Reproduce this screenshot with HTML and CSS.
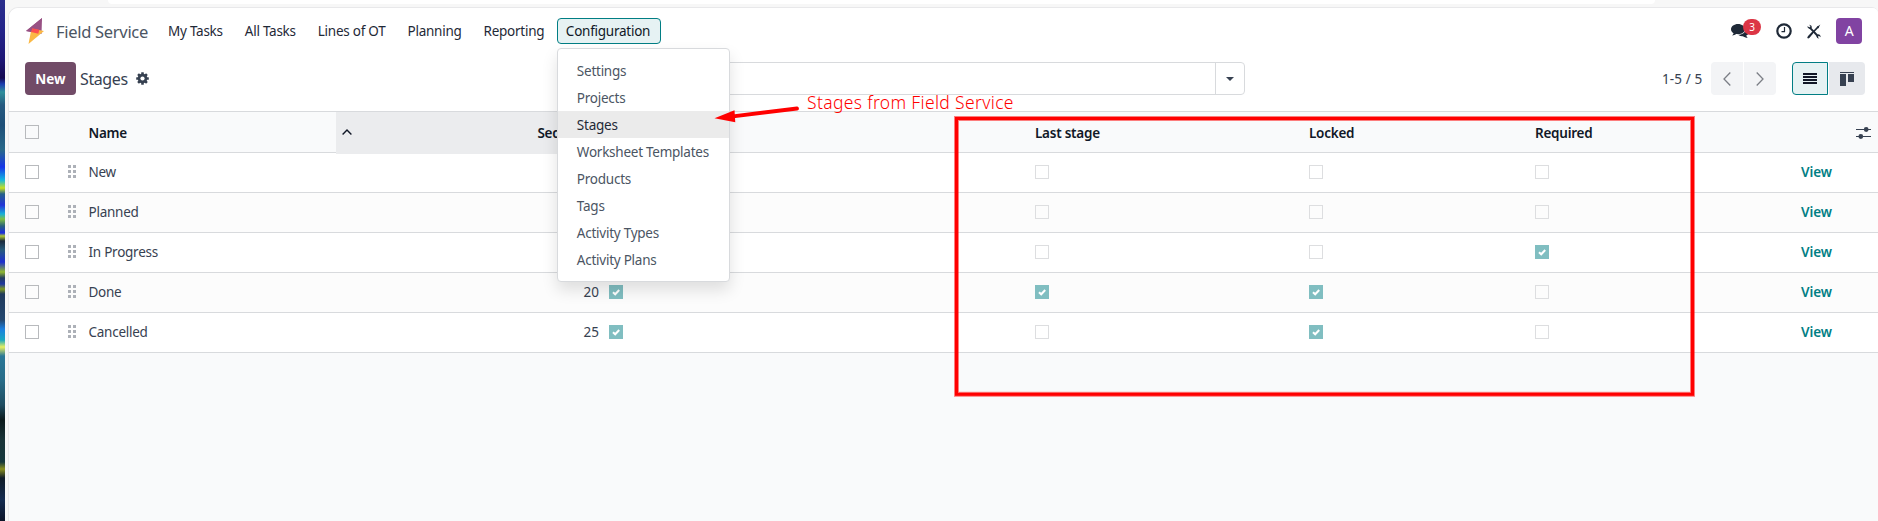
FILE: index.html
```html
<!DOCTYPE html>
<html lang="en">
<head>
<meta charset="utf-8">
<title>Field Service - Stages</title>
<link rel="stylesheet" href="styles.css">
</head>
<body>
<div class="desktop">
  <div class="wallpaper"></div>
  <div class="browser">
    <div class="chrome"><div class="address-bar"></div></div>
    <div class="app">
      <header class="navbar">
        <svg class="logo" width="18" height="26" viewBox="0 0 18 26"><path d="M16 0 L0 13 L15.500 16 Z" fill="#985184"/><path d="M2.500 26 L18 13 L5.500 10.500 Z" fill="#fbb945"/><path d="M16 0 L0 13 L5.500 14 L6.400 10.600 L13.300 11.800 Z" fill="#985184"/><path d="M6.400 10.200 L13.300 11.800 L12.300 15.800 L5 14 Z" fill="#fc4f4f"/></svg>
        <span class="brand">Field Service</span>
        <nav class="menu">
          <a class="menu-item">My Tasks</a>
          <a class="menu-item">All Tasks</a>
          <a class="menu-item">Lines of OT</a>
          <a class="menu-item">Planning</a>
          <a class="menu-item">Reporting</a>
          <div class="menu-drop">
            <a class="menu-item active">Configuration</a>
            <div class="dropdown">
              <a class="option">Settings</a>
              <a class="option">Projects</a>
              <a class="option current">Stages</a>
              <a class="option">Worksheet Templates</a>
              <a class="option">Products</a>
              <a class="option">Tags</a>
              <a class="option">Activity Types</a>
              <a class="option">Activity Plans</a>
            </div>
          </div>
        </nav>
        <div class="systray">
          <div class="messages">
            <svg width="18" height="15" viewBox="0 0 18 15" fill="#1f2937"><path d="M7 0C3.200 0 0 2.300 0 5.200c0 1.700 1 3.100 2.600 4.100-.3 1-.9 1.700-1.500 2.300 1.700-.1 3.100-.7 4.200-1.500.6.100 1.100.1 1.700.1 3.900 0 7-2.200 7-5S10.900 0 7 0z"/><path d="M15 4.300c0 3.800-3.500 6.500-7.500 6.700 1.200.9 2.700 1.300 4.300 1.200 1.200.9 2.900 1.500 4.900 1.600-.7-.7-1.200-1.300-1.500-2.200C16.900 10.700 18 9.400 18 7.900c0-1.500-1.200-2.900-3-3.600z"/></svg>
            <span class="badge">3</span>
          </div>
          <svg class="clock" width="16" height="16" viewBox="0 0 16 16" fill="none" stroke="#1f2937"><circle cx="8" cy="8" r="6.700" stroke-width="2.200"/><path d="M8.500 4v4.600H5.500" stroke-width="1.200"/></svg>
          <svg class="tools" width="14" height="15" viewBox="0 0 14 15"><path d="M2.800 3.600 L10.800 12" stroke="#1f2937" stroke-width="2" fill="none"/><path d="M11.500 2.500 L1.500 13" stroke="#1f2937" stroke-width="1.800" fill="none"/><path d="M13.300 .5 L9.800 2.900 L11.200 4.400 Z" fill="#1f2937"/><path d="M6 9.500 L2.500 13.800 Q1 15 .3 13.700 Q.2 13 1 12.300 L4.800 8.300 Z" fill="#1f2937"/><path d="M2 .7 L3.500 2.300 L2.200 3.500 L.6 2.100 Q.2 4.700 3.200 5 L5 3.200 Q4.700 .6 2 .7zM12.300 14.600 L10.800 13 L11.900 11.800 L13.500 13.300 Q14 10.600 11 10.200 L9.300 12 Q9.700 14.700 12.300 14.600z" fill="#1f2937"/></svg>
          <span class="avatar">A</span>
        </div>
      </header>

      <div class="control-panel">
        <button class="btn-new">New</button>
        <span class="crumb">Stages</span>
        <svg class="gear" width="13" height="13" viewBox="0 0 13 13"><g fill="#374151"><circle cx="6.500" cy="6.500" r="4.800"/><rect x="5.200" y=".2" width="2.600" height="12.600" rx=".4"/><rect x=".2" y="5.200" width="12.600" height="2.600" rx=".4"/><g transform="rotate(45 6.500 6.500)"><rect x="5.200" y=".2" width="2.600" height="12.600" rx=".4"/><rect x=".2" y="5.200" width="12.600" height="2.600" rx=".4"/></g></g><circle cx="6.500" cy="6.500" r="2.100" fill="#fff"/></svg>
        <div class="search"><div class="search-input"></div><div class="search-toggle"><span class="caret"></span></div></div>
        <span class="pager">1-5 / 5</span>
        <div class="pager-buttons">
          <span class="pg prev"><svg width="8" height="14" viewBox="0 0 8 14"><path d="M7.300 .5 L1 7 L7.300 13.500" fill="none" stroke="#7c7f86" stroke-width="1.300"/></svg></span>
          <span class="pg next"><svg width="8" height="14" viewBox="0 0 8 14"><path d="M.7 .5 L7 7 L.7 13.500" fill="none" stroke="#7c7f86" stroke-width="1.300"/></svg></span>
        </div>
        <div class="views">
          <span class="view list"><svg width="14" height="11" viewBox="0 0 14 11" fill="#111827"><rect width="14" height="2"/><rect y="3" width="14" height="2"/><rect y="6" width="14" height="2"/><rect y="9" width="14" height="2"/></svg></span>
          <span class="view kanban"><svg width="14" height="14" viewBox="0 0 14 14" fill="#374151"><rect width="14" height="1"/><rect y="2" width="6" height="12"/><rect x="8" y="2" width="6" height="8"/></svg></span>
        </div>
      </div>

      <div class="table">
        <div class="row head">
          <div class="c-check"><i class="box"></i></div><div></div>
          <div class="c-name">Name</div>
          <div class="c-seq"><svg width="10" height="6" viewBox="0 0 10 6"><path d="M.6 5.500 L5 1 L9.400 5.500" fill="none" stroke="#111827" stroke-width="1.400"/></svg><span class="seq-label">Sequence</span></div>
          <div class="c-flag"></div>
          <div class="c-flag">Last stage</div>
          <div class="c-flag">Locked</div>
          <div class="c-flag">Required</div>
          <div></div>
          <div class="c-opt"><svg width="15" height="12" viewBox="0 0 15 12" fill="#374151"><path d="M0 2h15v1H0zM0 9h15v1H0z"/><circle cx="10.200" cy="2.500" r="2.400"/><circle cx="4.800" cy="9.500" r="2.400"/></svg></div>
        </div>
        <div class="row">
          <div class="c-check"><i class="box"></i></div><div class="c-handle"><i class="grip"></i></div>
          <div class="c-name">New</div><div class="c-seq"></div>
          <div class="c-flag"><i class="flag"></i></div><div class="c-flag"><i class="flag"></i></div><div class="c-flag"><i class="flag"></i></div><div class="c-flag"><i class="flag"></i></div>
          <div class="c-view">View</div><div></div>
        </div>
        <div class="row alt">
          <div class="c-check"><i class="box"></i></div><div class="c-handle"><i class="grip"></i></div>
          <div class="c-name">Planned</div><div class="c-seq"></div>
          <div class="c-flag"><i class="flag"></i></div><div class="c-flag"><i class="flag"></i></div><div class="c-flag"><i class="flag"></i></div><div class="c-flag"><i class="flag"></i></div>
          <div class="c-view">View</div><div></div>
        </div>
        <div class="row">
          <div class="c-check"><i class="box"></i></div><div class="c-handle"><i class="grip"></i></div>
          <div class="c-name">In Progress</div><div class="c-seq"></div>
          <div class="c-flag"><i class="flag"></i></div><div class="c-flag"><i class="flag"></i></div><div class="c-flag"><i class="flag"></i></div><div class="c-flag"><i class="flag on"><svg width="14" height="14" viewBox="0 0 14 14"><path d="M4 7.200 L6.200 9.300 L10.200 5" fill="none" stroke="#fff" stroke-width="2"/></svg></i></div>
          <div class="c-view">View</div><div></div>
        </div>
        <div class="row alt">
          <div class="c-check"><i class="box"></i></div><div class="c-handle"><i class="grip"></i></div>
          <div class="c-name">Done</div><div class="c-seq num">20</div>
          <div class="c-flag"><i class="flag on"><svg width="14" height="14" viewBox="0 0 14 14"><path d="M4 7.200 L6.200 9.300 L10.200 5" fill="none" stroke="#fff" stroke-width="2"/></svg></i></div><div class="c-flag"><i class="flag on"><svg width="14" height="14" viewBox="0 0 14 14"><path d="M4 7.200 L6.200 9.300 L10.200 5" fill="none" stroke="#fff" stroke-width="2"/></svg></i></div><div class="c-flag"><i class="flag on"><svg width="14" height="14" viewBox="0 0 14 14"><path d="M4 7.200 L6.200 9.300 L10.200 5" fill="none" stroke="#fff" stroke-width="2"/></svg></i></div><div class="c-flag"><i class="flag"></i></div>
          <div class="c-view">View</div><div></div>
        </div>
        <div class="row">
          <div class="c-check"><i class="box"></i></div><div class="c-handle"><i class="grip"></i></div>
          <div class="c-name">Cancelled</div><div class="c-seq num">25</div>
          <div class="c-flag"><i class="flag on"><svg width="14" height="14" viewBox="0 0 14 14"><path d="M4 7.200 L6.200 9.300 L10.200 5" fill="none" stroke="#fff" stroke-width="2"/></svg></i></div><div class="c-flag"><i class="flag"></i></div><div class="c-flag"><i class="flag on"><svg width="14" height="14" viewBox="0 0 14 14"><path d="M4 7.200 L6.200 9.300 L10.200 5" fill="none" stroke="#fff" stroke-width="2"/></svg></i></div><div class="c-flag"><i class="flag"></i></div>
          <div class="c-view">View</div><div></div>
        </div>
      </div>
    </div>
  </div>
  <svg class="markup" width="1878" height="521" viewBox="0 0 1878 521">
    <rect x="956.500" y="118.500" width="736" height="275.800" fill="none" stroke="#f00" stroke-opacity=".5" stroke-width="5"/>
    <rect x="956.500" y="118.500" width="736" height="275.800" fill="none" stroke="#f00" stroke-width="3"/>
    <path d="M797 108.500 L733 116.300" stroke="#f00" stroke-width="3.800" stroke-linecap="round"/>
    <path d="M714.500 118.200 L734.500 110.300 L735.300 122.300 Z" fill="#f00"/>
  </svg>
  <span class="note">Stages from Field Service</span>
</div>
</body>
</html>
```
FILE: styles.css
```css
* { box-sizing: border-box; }
body {
  margin: 0;
  width: 1878px;
  height: 521px;
  overflow: hidden;
  font-family: "Noto Sans", "Open Sans", sans-serif;
  font-size: 13.5px;
  letter-spacing: -.25px;
  color: #374151;
}
.desktop { position: relative; display: flex; height: 521px; }
.wallpaper {
  width: 5px;
  background: linear-gradient(180deg, #2b2f8c 0, #24248a 30px, #1d1675 60px, #150a52 78px, #1a3cb0 84px, #2f8f9c 92px, #265a80 105px, #1f4f78 125px, #29698a 150px, #1534e8 167px, #12b8e0 180px, #c8e020 188px, #24608a 194px, #2233d8 205px, #18b0d8 214px, #7fc040 219px, #28607c 226px, #1a2be0 233px, #b0c830 236px, #1b2a3c 241px, #265a7c 250px, #1c2ed0 262px, #90b830 272px, #233c60 278px, #2038a0 284px, #7f9a20 289px, #203a5c 294px, #244870 320px, #1b7fe0 329px, #18a8c0 340px, #e8f060 347px, #2a7898 356px, #286c88 380px, #1f4c60 405px, #0c1a1c 420px, #1a3438 440px, #16383c 462px, #8a9020 469px, #101c28 478px, #152c50 500px, #0c1428 521px);
}
.browser { flex: 1; background: #f7f7f7; padding-left: 3px; }
.chrome { height: 7px; padding: 0 223px 0 100px; }
.address-bar { height: 4px; background: #fff; border-radius: 0 0 12px 12px; }
.app {
  height: 514px;
  border: 1px solid #e8e8ea;
  border-width: 1px 0 0 1px;
  border-radius: 10px 6px 0 0;
  background: #f9fafb;
  overflow: hidden;
}
.navbar { display: flex; align-items: center; height: 46px; padding: 0 16px 0 17px; background: #fff; }
.brand { margin-left: 12px; width: 92px; font-size: 16.5px; letter-spacing: -.3px; white-space: nowrap; color: #4b5563; }
.menu { display: flex; align-items: center; margin-left: 9px; color: #1f2937; }
.menu-item { height: 26px; padding: 0 11px; line-height: 26px; white-space: nowrap; }
.menu-drop { position: relative; margin-left: 1.5px; }
.menu-item.active { display: block; width: 104px; padding: 0 8px; line-height: 24px; background: #e6f2f3; border: 1px solid #017e84; border-radius: 4px; color: #111827; }
.dropdown {
  position: absolute; z-index: 5; top: 30px; left: 0; width: 173px; padding: 8px 0;
  background: #fff; border: 1px solid #d8dadd; border-radius: 4px;
  box-shadow: 0 8px 16px rgba(0, 0, 0, .12);
}
.option { display: block; height: 27px; padding-left: 19px; line-height: 29px; white-space: nowrap; color: #4b5563; }
.option.current { background: #ebebeb; color: #1f2937; }
.systray { display: flex; align-items: center; margin-left: auto; }
.messages { position: relative; display: flex; width: 30px; }
.badge { position: absolute; left: 12px; top: -5px; width: 18px; height: 16px; border-radius: 8px; background: #dc3545; color: #fff; font-size: 10px; line-height: 16px; text-align: center; }
.clock { margin-left: 15px; }
.tools { margin-left: 15px; }
.avatar { width: 26px; height: 26px; margin-left: 15px; border-radius: 4px; background: #8143a2; color: #fff; font-size: 14px; line-height: 26px; text-align: center; }
.control-panel { display: flex; align-items: center; height: 57px; padding: 0 13px 8px 16px; background: #fff; }
.btn-new { width: 51px; height: 33px; padding: 0; border: 0; border-radius: 4px; background: #714b67; color: #fff; font: 700 13.500px "Noto Sans", sans-serif; }
.crumb { width: 55px; margin-left: 4px; font-size: 16px; letter-spacing: -.4px; white-space: nowrap; }
.gear { margin-left: 1px; }
.search { display: flex; width: 625px; height: 33px; margin-left: 471px; border: 1px solid #d8dadd; border-radius: 4px; }
.search-input { flex: 1; }
.search-toggle { display: flex; align-items: center; justify-content: center; width: 29px; border-left: 1px solid #d8dadd; }
.caret { border: 4px solid transparent; border-top-color: #374151; border-bottom: 0; }
.pager { width: 49px; margin-left: auto; letter-spacing: .1px; white-space: nowrap; }
.pager-buttons { display: flex; gap: 1px; }
.pg { display: flex; align-items: center; justify-content: center; width: 32px; height: 33px; background: #f3f4f6; }
.prev { border-radius: 4px 0 0 4px; }
.next { border-radius: 0 4px 4px 0; }
.views { display: flex; gap: 1px; margin-left: 16px; }
.view { display: flex; align-items: center; justify-content: center; width: 36px; height: 33px; background: #e7e9ed; }
.list { background: #e6f2f3; border: 1px solid #017e84; border-radius: 4px 0 0 4px; }
.kanban { border-radius: 0 4px 4px 0; }
.table { border-top: 1px solid #d8dadd; }
.row {
  display: grid; grid-template-columns: 50px 22px 255px 267px 426px 274px 226px 256px 63px 30px;
  height: 40px; background: #fff; border-bottom: 1px solid #d8dadd; line-height: 39px; white-space: nowrap;
}
.row.alt { background: #fcfcfc; }
.row.head { height: 41px; background: #f9fafb; color: #111827; font-weight: 600; line-height: 42px; }
.c-check { display: flex; padding: 12px 0 0 16px; }
.head .c-check { padding-top: 13px; }
.box { width: 14px; height: 14px; border: 1px solid #b8babd; }
.c-handle { padding: 12px 0 0 9px; }
.grip { display: block; width: 8px; height: 13px; background: repeating-linear-gradient(180deg, transparent 0 3px, #fff 3px 5px), linear-gradient(90deg, #adb1b8 3px, transparent 3px 5px, #adb1b8 5px); }
.alt .grip { background: repeating-linear-gradient(180deg, transparent 0 3px, #fcfcfc 3px 5px), linear-gradient(90deg, #adb1b8 3px, transparent 3px 5px, #adb1b8 5px); }
.c-name { padding-left: 7.5px; }
.c-seq { display: flex; align-items: center; justify-content: space-between; padding: 0 4px 0 6px; }
.c-seq.num { justify-content: flex-end; letter-spacing: 0; }
.head .c-seq { background: #ebecee; }
.head .c-seq svg { margin-top: -2px; }
.c-flag { padding-left: 6px; }
.flag { display: block; width: 14px; height: 14px; margin-top: 12px; border: 1px solid #dddee0; line-height: 0; }
.flag.on { border: 0; background: #80bec1; }
.c-view { padding-left: 16px; font-weight: 600; letter-spacing: -.1px; color: #017e84; }
.c-opt { padding: 15px 0 0 8px; line-height: 0; }
.markup { position: absolute; z-index: 10; left: 0; top: 0; }
.note { position: absolute; z-index: 11; left: 807px; top: 89px; color: #f00; font-size: 17.500px; letter-spacing: .34px; font-weight: 300; line-height: 26px; white-space: nowrap; }
```
